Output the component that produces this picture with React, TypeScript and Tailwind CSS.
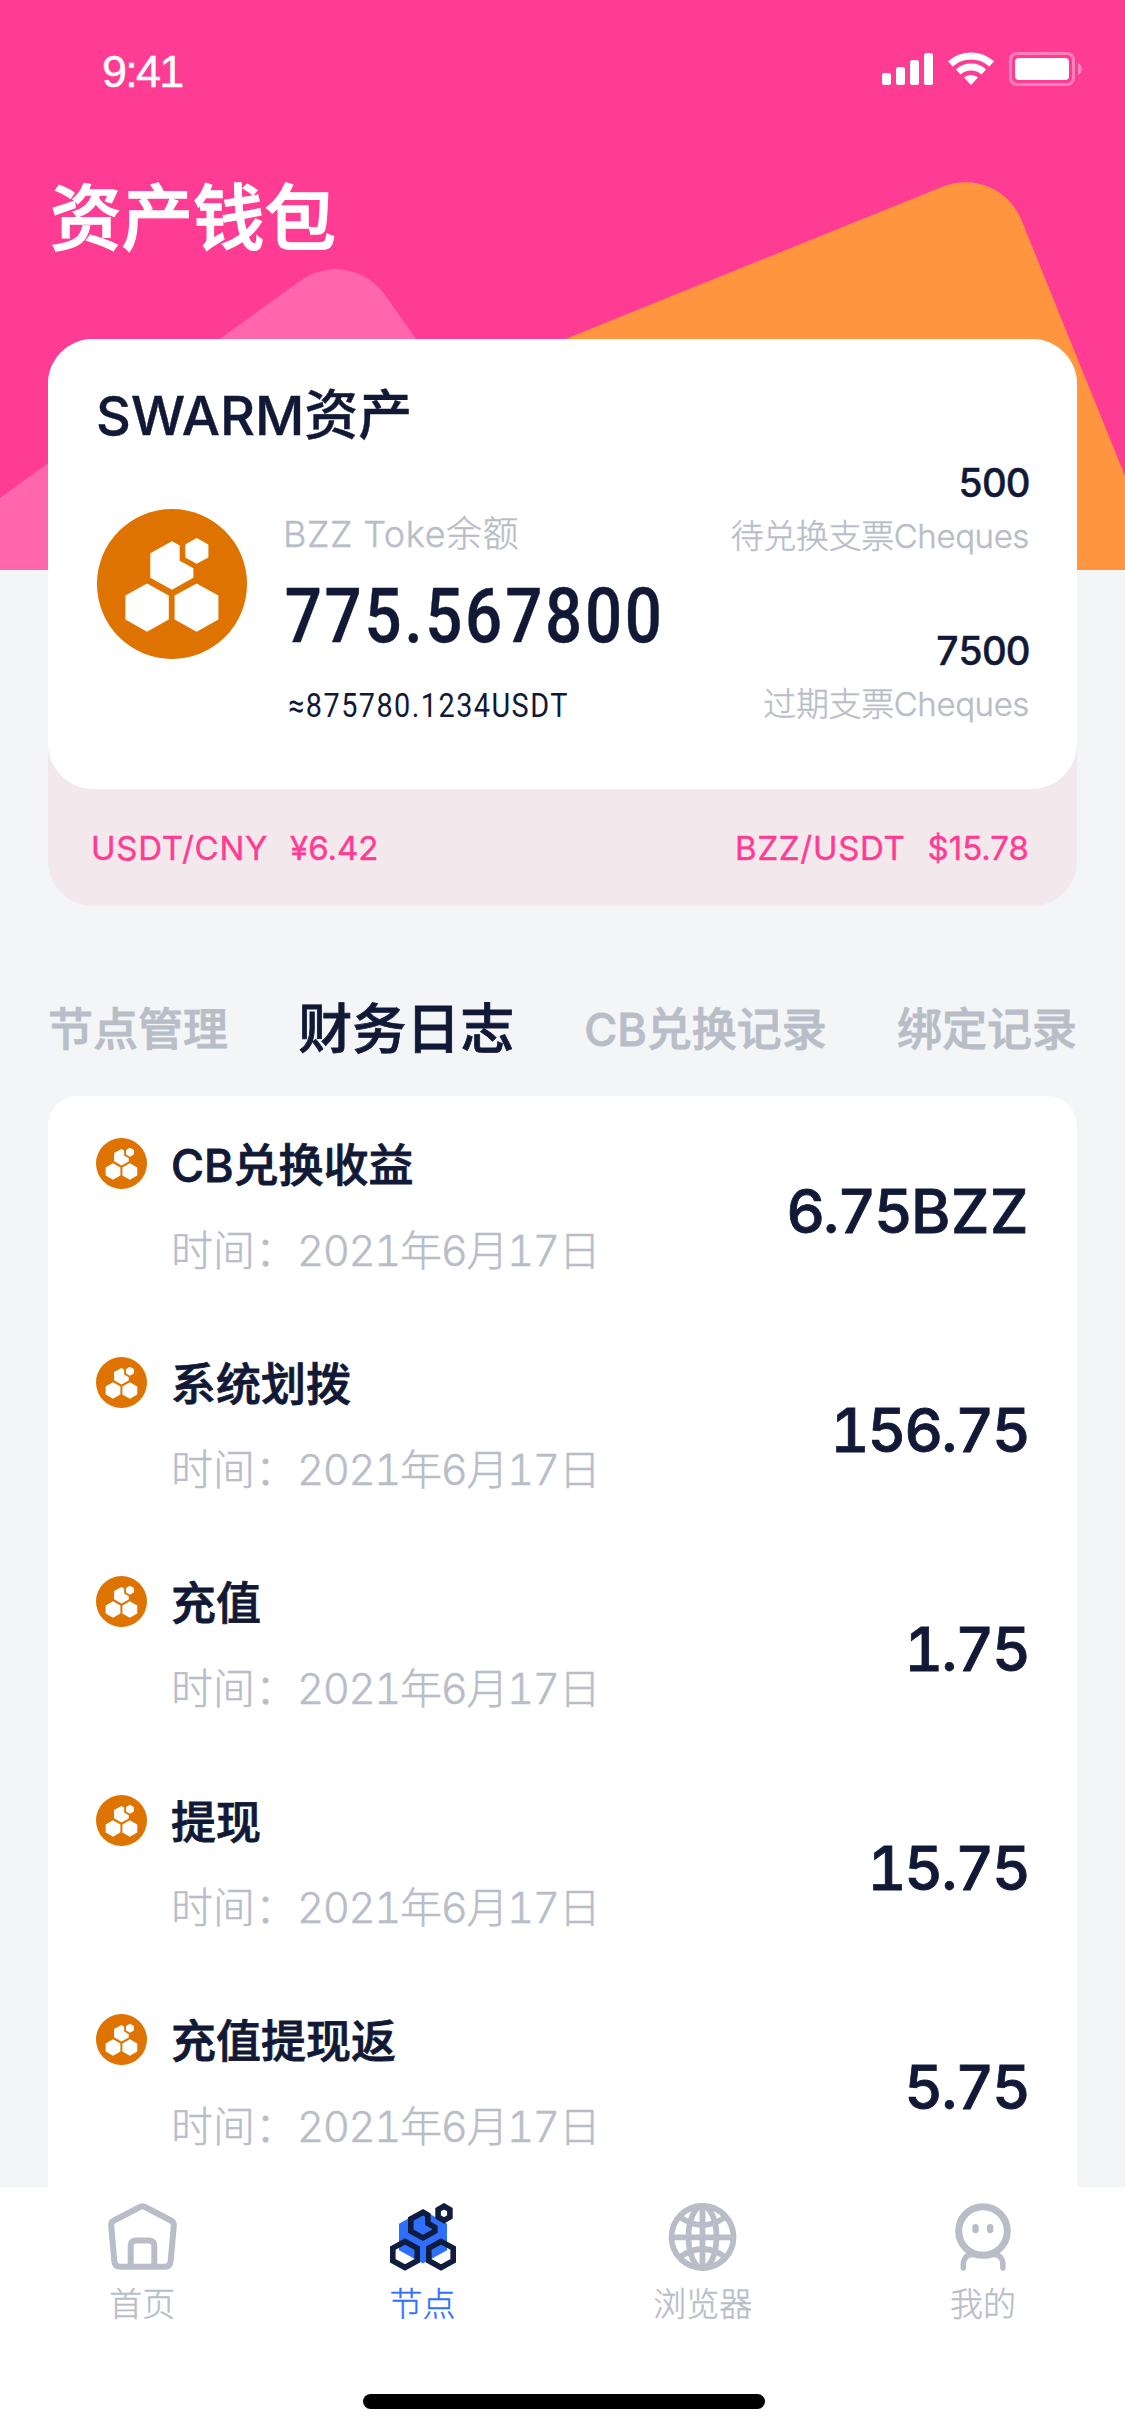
import { ReactNode, useState } from 'react'
import clsx from 'clsx'

const LOGS = [
  { id: 1, label: 'CB兑换收益', date: '2021年6月17日', amount: '6.75', unit: 'BZZ' },
  { id: 2, label: '系统划拨', date: '2021年6月17日', amount: '156.75' },
  { id: 3, label: '充值', date: '2021年6月17日', amount: '1.75' },
  { id: 4, label: '提现', date: '2021年6月17日', amount: '15.75' },
  { id: 5, label: '充值提现返', date: '2021年6月17日', amount: '5.75' },
]

const TABS = ['节点管理', '财务日志', 'CB兑换记录', '绑定记录']

const RATES = [
  { pair: 'USDT/CNY', price: '¥6.42' },
  { pair: 'BZZ/USDT', price: '$15.78' },
]

function BzzLogo({ className }: { className?: string }) {
  return (
    <svg viewBox="0 0 150 150" className={className}>
      <circle cx="75" cy="75" r="75" fill="#de7300" />
      <g fill="#fff">
        <path d="M50 74.5l21.8 12v24L50 122.7l-21.6-12.2v-24z" />
        <path d="M99.6 74.5l21.8 12v24l-21.8 12.2-22-12.2v-24z" />
        <path d="M74.9 32.3l7.8 4.3v15.1l13.7 7.6v9.5L74.9 80.7 53.3 68.7V44.3z" />
        <path d="M99.6 29l11.8 6.4V48.6l-11.8 6.2-11.3-6.2V35.4z" />
      </g>
    </svg>
  )
}

function StatusBar() {
  return (
    <div className="h-[138px] pl-[102px] pr-[43px] pt-[46px] flex items-start justify-between text-white">
      <span className="font-['Liberation_Sans'] text-[45px] leading-[52px] tracking-[-1.8px]">9:41</span>
      <svg width="200" height="34" viewBox="0 0 200 34" className="mt-1.5" fill="currentColor">
        <rect x="0" y="21" width="9" height="12" rx="2.5" />
        <rect x="14" y="15" width="9" height="18" rx="2.5" />
        <rect x="28" y="8" width="9" height="25" rx="2.5" />
        <rect x="42" y="1" width="9" height="32" rx="2.5" />
        <g fill="none" stroke="currentColor" strokeWidth="7">
          <path d="M68.3 11.8a31 31 0 0 1 41.4 0" />
          <path d="M76.2 20a19 19 0 0 1 25.6 0" />
        </g>
        <path d="M89 33l-7-7.4c4-3.6 10-3.6 14 0z" />
        <rect x="128.5" y="1.5" width="63" height="31" rx="6.5" fill="none" stroke="currentColor" strokeWidth="3" opacity=".35" />
        <rect x="133" y="6" width="54" height="22" rx="4" />
        <path d="M196 11v12c5-2 5-10 0-12z" opacity=".4" />
      </svg>
    </div>
  )
}

function HomeIcon() {
  return (
    <svg width="69" height="68" viewBox="0 0 69 68" fill="none" stroke="currentColor" strokeWidth="6">
      <path d="M32 4 6 17.5q-3 1.6-2.8 5L6.3 58q.5 5.7 6 5.7h44.4q5.5 0 6-5.7l3.1-35.5q.2-3.4-2.8-5L37 4q-2.5-1.3-5 0z" />
      <path d="M22.7 63V43q0-5.5 5.5-5.5h12.6q5.5 0 5.5 5.5v20" />
    </svg>
  )
}

function NodeIcon() {
  return (
    <svg width="66" height="68" viewBox="0 0 66 68" fill="none" stroke="#0f1c3d" strokeWidth="5.6" className="ml-px">
      <path d="M33 7l24 13.7v26.6L33 60.5 9 47.3V20.7z" fill="#2f6fff" stroke="none" />
      <path d="M15 38.5l12.2 6.6v12.7L15 64.5 2.8 57.8V45.1z" />
      <path d="M51 38.5l12.2 6.6v12.7L51 64.5l-12.2-6.7V45.1z" />
      <path d="M33 9.3l4.9 2.8v8.2l7 4v3.9L33 34.9 20.8 28.2V16z" />
      <path d="M54 3.2l5.9 3.4v7.3L54 17.4l-5.9-3.5V6.6z" />
    </svg>
  )
}

function GlobeIcon() {
  return (
    <svg width="69" height="68" viewBox="0 0 69 68" fill="none" stroke="currentColor" strokeWidth="5.8">
      <circle cx="34.5" cy="34" r="31" />
      <ellipse cx="34.5" cy="34" rx="14" ry="31" />
      <path d="M34.5 3v62M3.5 34.3h62" />
      <path d="M11 13.5q23.5 17 47 0M11 54.5q23.5-17 47 0" />
    </svg>
  )
}

function MeIcon() {
  return (
    <svg width="56" height="68" viewBox="0 0 56 68" fill="none" stroke="currentColor" strokeWidth="5.5" strokeLinecap="round">
      <circle cx="28" cy="28" r="24.3" strokeWidth="7" />
      <path d="M8.3 65v-3c0-6 3-10.5 9-10.5h21.6c6 0 9 4.5 9 10.5v3" />
      <path d="M20.5 24.2v2.9M35.2 24.2v2.9" strokeWidth="6.3" />
    </svg>
  )
}

const NAV: { label: string; icon: ReactNode }[] = [
  { label: '首页', icon: <HomeIcon /> },
  { label: '节点', icon: <NodeIcon /> },
  { label: '浏览器', icon: <GlobeIcon /> },
  { label: '我的', icon: <MeIcon /> },
]

export default function App() {
  const [tab, setTab] = useState('财务日志')
  const [page, setPage] = useState('节点')

  return (
    <div className="relative w-[1125px] h-[2436px] overflow-hidden flex flex-col bg-[#f3f5f7] text-[#111936] tabular-nums [-webkit-text-stroke:0.4px] font-['Inter','Noto_Sans_CJK_SC',sans-serif]">
      {/* Header backdrop */}
      <svg width="1125" height="570" viewBox="0 0 1125 570" className="absolute top-0 left-0">
        <path d="M0 0h1125v570H0z" fill="#ff3c93" />
        <path d="M565.6 339L943.1 186.5A60 60 0 0 1 1021.2 219.6L1125 476v94H565.6z" fill="#ff953e" />
        <path d="M0 498L300.4 280.7A60 60 0 0 1 384.2 294.1L416.2 339v231H0z" fill="#ff66ac" />
      </svg>

      <div className="relative flex-1 min-h-0 flex flex-col">
        <StatusBar />
        <h1 className="h-[201px] pl-[50px] pt-[28px] text-[71.5px] leading-[104px] font-medium text-white [-webkit-text-stroke:1.4px]">资产钱包</h1>

        {/* Balance card */}
        <section className="mx-12 h-[567px] shrink-0 rounded-[45px] bg-[#f3e8ec]">
          <div className="h-[450px] rounded-[45px] bg-white px-12 pt-[44px]">
            <h2 className="text-[54px] leading-[66px] font-medium">SWARM资产</h2>
            <div className="flex justify-between">
              <div className="flex gap-[36px] pl-px pt-[60px]">
                <BzzLogo className="w-[150px] h-[150px]" />
                <div className="pt-[3px]">
                  <p className="text-[36px] leading-[44px] font-light tracking-[0.6px] text-[#b8bdc7]">BZZ Toke余额</p>
                  <p className="mt-[14px] w-[380px] pl-[2px] font-['Roboto'] font-medium text-[76px] leading-[92px] tracking-[3.2px] origin-left scale-x-[0.86]">775.567800</p>
                  <p className="mt-[24px] w-[284px] pl-[6px] font-['Roboto'] text-[33.5px] leading-[40px] tracking-[1.7px] origin-left scale-x-[0.86] [-webkit-text-stroke:0]">≈875780.1234USDT</p>
                </div>
              </div>
              <div className="text-right pt-[8px]">
                <p className="text-[39px] leading-[52px] font-medium tracking-[-1.7px]">500</p>
                <p className="pt-0.5 text-[33px] leading-[50px] font-light tracking-[-0.4px] text-[#b8bdc7]">待兑换支票Cheques</p>
                <p className="mt-[64px] text-[39px] leading-[52px] font-medium tracking-[-1.7px]">7500</p>
                <p className="pt-0.5 text-[33px] leading-[50px] font-light tracking-[-0.4px] text-[#b8bdc7]">过期支票Cheques</p>
              </div>
            </div>
          </div>
          <div className="h-[117px] pl-[43px] pr-12 pt-0.5 flex items-center justify-between text-[33px] proportional-nums text-[#ff3c93]">
            {RATES.map(({ pair, price }) => (
              <p key={pair} className="flex gap-[22px]">
                <span className="tracking-[0.7px]">{pair}</span>
                <span>{price}</span>
              </p>
            ))}
          </div>
        </section>

        {/* Tabs */}
        <div className="h-[190px] shrink-0 px-[48px] pt-[57px] flex justify-between items-center whitespace-nowrap [-webkit-text-stroke:0.8px]">
          {TABS.map((name) => (
            <button
              key={name}
              onClick={() => setTab(name)}
              className={clsx('font-medium leading-[66px]', tab === name ? 'text-[54px]' : 'text-[45px] text-[#b8bdc7]')}
            >
              {name}
            </button>
          ))}
        </div>

        {/* Log list */}
        <ul className="mx-12 flex-1 min-h-0 overflow-hidden rounded-t-[30px] bg-white px-12">
          {LOGS.map((log) => (
            <li key={log.id} className="h-[219px] pt-[36px] flex">
              <BzzLogo className="mt-[6px] w-[51px] h-[51px]" />
              <div className="ml-6 pt-[2px] flex-1">
                <p className="text-[45px] leading-[64px] font-medium [-webkit-text-stroke:0.8px]">{log.label}</p>
                <p className="mt-[23px] text-[42px] leading-[60px] font-light text-[#b8bdc7]">
                  时间：<span className="tracking-[-1.4px]">{log.date}</span>
                </p>
              </div>
              <p className="pt-[42px] text-[60px] leading-[74px] font-medium [-webkit-text-stroke:0.8px]">
                <span className="tracking-[-2px]">{log.amount}</span>
                {log.unit && <span className="tracking-[0.6px]">{log.unit}</span>}
              </p>
            </li>
          ))}
        </ul>
      </div>

      {/* Bottom nav */}
      <nav className="relative h-[249px] shrink-0 bg-white flex flex-col">
        <div className="px-0.5 pt-4 grid grid-cols-4">
          {NAV.map((item) => (
            <button
              key={item.label}
              onClick={() => setPage(item.label)}
              className={clsx('flex flex-col items-center', page === item.label ? 'text-[#2f6fff]' : 'text-[#b8bdc7]')}
            >
              {item.icon}
              <span className="mt-[9px] text-[33px] leading-[48px] font-light">{item.label}</span>
            </button>
          ))}
        </div>
        <div className="mt-auto mb-[27px] ml-[363px] w-[402px] h-[15px] rounded-full bg-black" />
      </nav>
    </div>
  )
}
